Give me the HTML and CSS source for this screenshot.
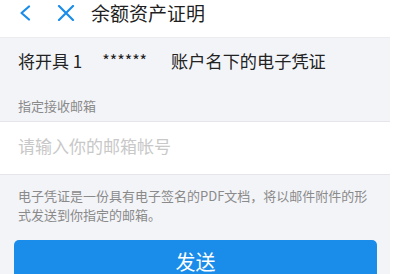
FILE: index.html
```html
<!DOCTYPE html>
<html lang="zh">
<head>
<meta charset="utf-8">
<link rel="stylesheet" href="styles.css">
</head>
<body>
<div class="page">
  <header class="nav">
    <svg class="icon back" width="14" height="16" viewBox="0 0 14 16"><path d="M11 1.5 L3.5 8 L11 14.5" fill="none" stroke="#1a8cea" stroke-width="2.2" stroke-linecap="round" stroke-linejoin="round"/></svg>
    <svg class="icon close" width="18" height="16" viewBox="0 0 18 16"><path d="M2 1 L16 15 M16 1 L2 15" fill="none" stroke="#1a8cea" stroke-width="2.2" stroke-linecap="round"/></svg>
    <h1 class="title">余额资产证明</h1>
  </header>
  <div class="info"><span>将开具 1</span><span class="mask">******</span><span class="tail">账户名下的电子凭证</span></div>
  <div class="label">指定接收邮箱</div>
  <div class="input">请输入你的邮箱帐号</div>
  <p class="desc">电子凭证是一份具有电子签名的PDF文档，将以邮件附件的形式发送到你指定的邮箱。</p>
  <div class="btnwrap"><button class="btn">发送</button></div>
</div>
</body>
</html>
```
FILE: styles.css
```css
* { box-sizing: border-box; }
html, body { margin: 0; padding: 0; background: #fff; }
body { font-family: "Noto Sans CJK SC", "Noto Sans", sans-serif; }
.page { width: 390px; height: 274px; background: #f3f4f8; overflow: hidden; }
.nav { height: 38px; background: #fff; display: flex; align-items: center; border-bottom: 1px solid #ececf0; padding-bottom: 11px; }
.icon { display: block; }
.back { margin-left: 18px; }
.close { margin-left: 25px; }
.title { margin: 0 0 0 16px; font-size: 19px; font-weight: 400; color: #1f1f1f; line-height: 24px; }
.info { height: 44px; display: flex; align-items: center; padding-left: 18px; font-size: 17px; color: #222; }
.mask { margin-left: 20px; font-size: 16px; }
.tail { margin-left: 24px; font-size: 17.2px; }
.label { height: 40px; padding: 15px 0 0 18px; font-size: 13px; line-height: 18px; color: #8a8a8a; border-bottom: 1px solid #e6e6ea; }
.input { height: 53px; background: #fff; display: flex; align-items: center; padding-left: 18px; padding-bottom: 5px; font-size: 17px; color: #c8c8c8; border-bottom: 1px solid #e6e6ea; }
.desc { margin: 0; padding: 11px 22px 0 18px; font-size: 13px; line-height: 19px; color: #8a8a8a; }
.btnwrap { padding: 16px 13px 0 14px; }
.btn { display: block; width: 100%; height: 48px; border: 0; border-radius: 5px; background: #1a8cea; color: #fff; font-family: inherit; font-size: 20px; padding: 0 0 6px; }
```
